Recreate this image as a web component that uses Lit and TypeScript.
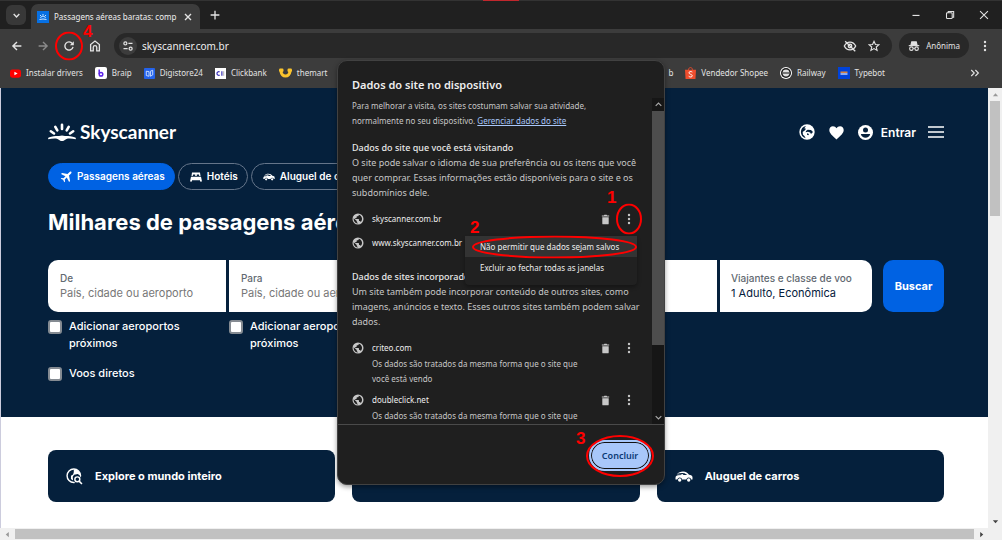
import { LitElement, html, css, svg, nothing } from "lit";
import { customElement } from "lit/decorators.js";

const stroke = (size: number, body: unknown, width = 1.5) => html`<svg width=${size} height=${size} viewBox="0 0 16 16" fill="none"
  stroke="currentColor" stroke-width=${width} aria-hidden="true">${body}</svg>`;
const solid = (w: number, h: number, box: string, body: unknown) => html`<svg width=${w} height=${h} viewBox=${box}
  fill="currentColor" aria-hidden="true">${body}</svg>`;

const globe = (size: number) => solid(size, size, "0 0 24 24", svg`<circle cx="12" cy="12" r="11"/>
  <path fill="#1f1f1f" d="M3.500 10.500l6 5.500v1.500c0 1 .8 2 2 2v1.400C6.500 20.500 2.500 16 3.500 10.500zM13.500 3.500c0 2-1 3-2.200 3H9.500V8.500c0 .8-.6 1.400-1.400 1.400H6.500v2h6.200c.8 0 1.300.6 1.300 1.300v3h1.200c1 0 1.900.7 2.200 1.600C21.500 14.500 21.500 6 13.500 3.500z"/>`);
const earth = (size: number) => solid(size, size, "0 0 24 24", svg`<circle cx="12" cy="12" r="11.500"/>
  <path fill="#05203c" d="M10.500 3C5.500 4 2.800 7.500 2.800 12C2.800 16.500 5.500 20 10 21.200L8.200 18L6 16.200L5.500 12L9 9.200L10.500 7L8 6.200zM21 12l-3-3-5-.5-2.500 2-.5 2 3.500-1 3.200 1.200 1.300 2.300 1.500-1.500z"/>
  <path fill="#05203c" d="M12 14l3 1-1 1.800-2-.8z"/>`);
const trash = solid(11, 11, "0 0 24 24", svg`<path d="M5 7h14v13.500a2 2 0 0 1-2 2H7a2 2 0 0 1-2-2zM4 3h4.500l1-1.500h5l1 1.500H20v2.500H4z"/>`);
const dots = solid(12, 12, "0 0 24 24", svg`<circle cx="12" cy="4" r="2.400"/><circle cx="12" cy="12" r="2.400"/><circle cx="12" cy="20" r="2.400"/>`);
const car = (w: number, h: number) => solid(w, h, "0 0 18 11", svg`<path d="M.5 7C.5 5 1.500 4.200 3.200 4.200L6.500 4.100V3.300H1.800C3.500 1.300 5.500.5 8 .5c3 0 4.800 1.300 6 3.300c2 .2 3.500.8 3.500 2.800V8.500h-1.300a2.500 2.500 0 0 0-4.900 0H7.200a2.500 2.500 0 0 0-4.900 0H.5z"/>
  <path fill="#05203c" d="M2 2.800Q6.500 1.400 9.500 2.200L12.300 3.900H8.500L7.500 3H2z"/><circle cx="4.700" cy="9" r="1.700"/><circle cx="13.700" cy="9" r="1.700"/>`);
const arrow = (d: string) => solid(7, 7, "0 0 8 8", svg`<path d=${d}/>`);

@customElement("step-mark")
class StepMark extends LitElement {
  static properties = { n: {}, w: { type: Number }, h: { type: Number } };
  declare n: string;
  declare w: number;
  declare h: number;
  static styles = css`
    :host { position: absolute; pointer-events: none; z-index: 5; color: #f00; top: 50%; left: 50%; transform: translate(-50%, -50%); }
    :host([n="2"]) { left: auto; right: 0; transform: translateY(-50%); }
    svg { display: block; }
    .n { position: absolute; font: bold 17px/17px "Liberation Sans", Arial, sans-serif; }
    .n1 { left: -9px; top: -15px; }
    .n2 { left: -2px; top: -17px; }
    .n3 { left: -10px; top: -5px; }
    .n4 { left: 28px; top: -9px; }
  `;
  render() {
    const { w, h } = this;
    return html`<svg width=${w} height=${h} fill="none" stroke="currentColor" stroke-width="2">
        <ellipse cx=${w / 2} cy=${h / 2} rx=${w / 2 - 1} ry=${h / 2 - 1} /></svg>
      <span class="n n${this.n}">${this.n}</span>`;
  }
}

@customElement("browser-chrome")
class BrowserChrome extends LitElement {
  static styles = css`
    :host { display: block; background: #3c3c3c; color: #e3e3e3; font: 8px/14px "Noto Sans", "Open Sans", sans-serif; }
    svg { display: block; flex: none; }
    button { all: unset; box-sizing: border-box; display: flex; align-items: center; justify-content: center; position: relative; flex: none; }
    .tabs { display: flex; height: 29px; box-sizing: border-box; background: #202020; border-top: 1px solid #333; padding-left: 6px; position: relative; }
    .alert { position: absolute; top: -1px; left: 48.2%; width: 36px; height: 1px; background: #c1272d; }
    .search { width: 20px; height: 20px; border-radius: 6px; background: #383838; margin-top: 4px; }
    .tab { display: flex; align-items: center; gap: 5px; width: 169px; box-sizing: border-box; padding: 0 6px; margin: 3px 8px 0 5px; background: #3c3c3c; border-radius: 7px 7px 0 0; }
    .title { flex: 1; white-space: nowrap; color: #eee; }
    .sq { width: 14px; height: 28px; }
    .controls { display: flex; margin-left: auto; gap: 20px; padding-right: 11px; }
    .bar { display: flex; align-items: center; height: 33px; padding: 0 11px 0 10px; }
    .nav { display: flex; gap: 12px; margin-right: 12px; }
    .nav button { width: 14px; height: 24px; }
    .dim { color: #8a8a8a; }
    .omni { flex: 1; display: flex; align-items: center; height: 25px; border-radius: 13px; background: #282828; padding: 0 12px 0 5px; gap: 11px; }
    .tune { width: 18px; height: 18px; border-radius: 9px; background: #3c3c3c; margin-right: -6px; }
    .url { all: unset; flex: 1; font-size: 10px; color: #eee; min-width: 0; }
    .incog { height: 25px; border-radius: 13px; background: #282828; padding: 0 9px; gap: 6px; margin: 0 10px 0 7px; }
    .marks { display: flex; align-items: center; height: 22px; gap: 12px; padding: 0 21px 4px 10px; }
    .marks a { display: flex; align-items: center; gap: 5px; color: inherit; text-decoration: none; white-space: nowrap; }
    .group { display: flex; gap: 12px; margin-left: auto; margin-right: 72px; }
  `;
  render() {
    return html`
      <div class="tabs">
        <span class="alert"></span>
        <button class="search" aria-label="Pesquisar guias">${stroke(9, svg`<path d="M3 5.500l5 5 5-5"/>`, 2.5)}</button>
        <div class="tab">
          <svg width="12" height="12" viewBox="0 0 12 12"><rect width="12" height="12" fill="#0770e3"/><path d="M2.500 8.500q3.500-1 7 0M3.500 7a2.600 2.600 0 0 1 5 0M6 3v1.500M3 4l1 1M9 4L8 5" stroke="#cfe6ff" fill="none"/></svg>
          <span class="title">Passagens aéreas baratas: comp</span>
          <button aria-label="Fechar guia">${stroke(12, svg`<path d="M4 4l8 8M12 4l-8 8"/>`, 1.8)}</button>
        </div>
        <button class="sq" aria-label="Nova guia">${stroke(14, svg`<path d="M8 3v10M3 8h10"/>`)}</button>
        <div class="controls">
          <button class="sq" aria-label="Minimizar">${stroke(14, svg`<path d="M4 8.500h8"/>`, 1.3)}</button>
          <button class="sq" aria-label="Restaurar">${stroke(14, svg`<rect x="4" y="5.500" width="6.500" height="6.500" rx="1"/><path d="M6 5.500V4h6.200v6.500H10.500"/>`, 1.2)}</button>
          <button class="sq" aria-label="Fechar">${stroke(14, svg`<path d="M3.500 3.500l9 9M12.500 3.500l-9 9"/>`, 1.2)}</button>
        </div>
      </div>
      <div class="bar">
        <div class="nav">
          <button aria-label="Voltar">${stroke(14, svg`<path d="M13 8H3.500M8 3.300L3.300 8L8 12.700"/>`, 1.6)}</button>
          <button class="dim" aria-label="Avançar">${stroke(14, svg`<path d="M3 8h9.500M8 3.300L12.700 8L8 12.700"/>`, 1.6)}</button>
          <button aria-label="Recarregar">${stroke(14, svg`<path d="M12.600 9A4.700 4.700 0 1 1 11.800 5.200"/><path d="M13.500 2.500V7H9z" fill="currentColor" stroke="none"/>`, 1.6)}<step-mark n="4" .w=${28} .h=${29}></step-mark></button>
          <button aria-label="Página inicial">${stroke(14, svg`<path d="M3 13.500V6.300L8 2.400L13 6.300V13.500H10V9.500a2 2 0 0 0-4 0V13.500z"/>`, 1.5)}</button>
        </div>
        <div class="omni">
          <button class="tune" aria-label="Informações do site">${stroke(12, svg`<circle cx="4.500" cy="4.500" r="2"/><path d="M8.500 4.500H14M2 11.500H7.500"/><circle cx="11.500" cy="11.500" r="2"/>`, 1.7)}</button>
          <input class="url" aria-label="Endereço" value="skyscanner.com.br" />
          <button aria-label="Cookies bloqueados">${stroke(14, svg`<path d="M1.500 8C3 5 5.300 3.500 8 3.500S13 5 14.500 8C13 11 10.700 12.500 8 12.500S3 11 1.500 8z"/><circle cx="8" cy="8" r="2"/><path d="M2.500 2.500l11.500 11.500"/>`, 1.5)}</button>
          <button aria-label="Favoritar">${stroke(12, svg`<path d="M8 1.800l1.900 4.200 4.600.4-3.500 3 1.100 4.500L8 11.500l-4.100 2.400L5 9.400 1.500 6.400l4.600-.4z"/>`, 1.5)}</button>
        </div>
        <button class="incog">${stroke(12, svg`<path d="M1 7.500h14"/><path d="M4 6.500L5 2.500h6l1 4z" fill="currentColor"/><circle cx="4.500" cy="11.500" r="2.300"/><circle cx="11.500" cy="11.500" r="2.300"/><path d="M6.800 11h2.400"/>`)}Anônima</button>
        <button aria-label="Menu">${dots}</button>
      </div>
      <div class="marks">
        <a href="#"><svg width="11" height="11" viewBox="0 0 12 12"><rect y="1.500" width="12" height="9" rx="2.500" fill="#f00"/><path d="M4.800 4v4L8.300 6z" fill="#fff"/></svg>Instalar drivers</a>
        <a href="#"><svg width="12" height="12" viewBox="0 0 12 12"><rect width="12" height="12" rx="2" fill="#fff"/><path d="M4.200 2.500V7" stroke="#5b21e8" stroke-width="1.500"/><circle cx="6" cy="7.200" r="1.800" fill="none" stroke="#5b21e8" stroke-width="1.500"/></svg>Braip</a>
        <a href="#"><svg width="11" height="11" viewBox="0 0 12 12"><rect width="12" height="12" rx="1" fill="#2463eb"/><path d="M2.500 3.500l3 .5v5l-3-.8zM7 3.500l2.500-1v5L7 9z" fill="none" stroke="#cfe0ff"/></svg>Digistore24</a>
        <a href="#"><svg width="11" height="11" viewBox="0 0 12 12"><rect width="12" height="12" fill="#fff"/><path d="M5 4.200a2 2 0 1 0 0 3.600M7.500 3.500v5" fill="none" stroke="#3b32b8" stroke-width="1.300"/><path d="M9.500 3.500v5" stroke="#aaa"/></svg>Clickbank</a>
        <a href="#"><svg width="13" height="12" viewBox="0 0 13 12"><path d="M2 4.500C3 10.500 10 10.500 11 4.500" fill="none" stroke="#fbc42d" stroke-width="3"/><rect x="0" y="1.500" width="4.500" height="3.500" rx="1.200" fill="#fbc42d"/><rect x="8.500" y="1.500" width="4.500" height="3.500" rx="1.200" fill="#fbc42d"/></svg>themart</a>
        <div class="group">
          <a href="#">b</a>
          <a href="#"><svg width="11" height="12" viewBox="0 0 12 13"><path d="M0 3h12l-.6 10H.6z" fill="#ee4d2d"/><path d="M3.800 3C3.800-.2 8.200-.2 8.200 3" fill="none" stroke="#ee4d2d"/><path d="M8 5.500C6.500 4.300 4 5 4.300 6.500S8 8 8 9.500 5.500 11.500 4 10" fill="none" stroke="#fff"/></svg>Vendedor Shopee</a>
          <a href="#"><svg width="12" height="12" viewBox="0 0 12 12"><circle cx="6" cy="6" r="6" fill="#fff"/><circle cx="6" cy="6" r="5" fill="#1a1a1a"/><circle cx="6" cy="6" r="3.400" fill="#ddd"/><path d="M3 6h6" stroke="#333" stroke-width="1.200"/></svg>Railway</a>
          <a href="#"><svg width="12" height="12" viewBox="0 0 12 12"><rect width="12" height="12" fill="#0042da"/><path d="M2.500 5.200h7" stroke="#ff8e20" stroke-width="1.300"/><path d="M2.500 7h7" stroke="#d8e2ff" stroke-width="1.300"/></svg>Typebot</a>
        </div>
        <button aria-label="Mais favoritos">${stroke(12, svg`<path d="M3 4L7 8L3 12M8.500 4L12.500 8l-4 4"/>`, 1.5)}</button>
      </div>`;
  }
}

@customElement("sky-page")
class SkyPage extends LitElement {
  static styles = css`
    :host { display: block; background: #fff; color: #fff; font: 11px/17px Inter, "Liberation Sans", sans-serif; overflow: hidden; }
    svg { display: block; flex: none; }
    button { all: unset; box-sizing: border-box; }
    .hero { background: #05203c; padding: 32px 44px 35px 47px; }
    header { display: flex; align-items: center; height: 24px; gap: 14px; }
    .logo { display: flex; align-items: center; gap: 4px; margin-right: auto; font: 700 19px/24px Lato, sans-serif; color: #fff; text-decoration: none; }
    .user { display: flex; align-items: center; gap: 8px; font-weight: 600; margin-right: -2px; font-size: 12px; }
    .pills { display: flex; gap: 3px; margin-top: 19px; }
    .pill { display: flex; align-items: center; gap: 5px; height: 27px; padding: 0 9px 0 11px; border: 1px solid #65758a; border-radius: 14px; font-weight: 600; font-size: 10px; color: #fff; text-decoration: none; white-space: nowrap; box-sizing: border-box; }
    .on { background: #0062e3; border-color: #0062e3; }
    h1 { font: 700 22px/32px Inter, sans-serif; margin: 16px 0 22px; white-space: nowrap; }
    form { display: grid; grid-template-columns: 178fr 178fr 152fr 152fr 152fr 61px; gap: 6px 3px; padding-right: 8px; }
    .field { height: 52px; box-sizing: border-box; background: #fff; color: #05203c; padding: 10px 11px 10px 12px; display: flex; flex-direction: column; justify-content: center; min-width: 0; white-space: nowrap; overflow: hidden; line-height: 15px; }
    .first { border-radius: 10px 0 0 10px; }
    .last { border-radius: 0 10px 10px 0; padding-left: 11px; }
    .cap { font-size: 10px; font-weight: 500; color: #626971; }
    input.txt { all: unset; width: 100%; }
    input.txt::placeholder { color: #777; opacity: 1; }
    .go { background: #0062e3; border-radius: 10px; text-align: center; font-weight: 700; margin-left: 8px; margin-right: -8px; }
    .check { display: flex; gap: 7px; font-weight: 500; }
    .check input { appearance: none; flex: none; box-sizing: border-box; width: 14px; height: 14px; margin: 2px 0 0; background: #fff; border: 2px solid #858b92; border-radius: 3px; }
    .near { max-width: 140px; }
    .direct { margin-top: 7px; grid-column: 1; }
    .cards { display: grid; grid-template-columns: repeat(3, 1fr); gap: 17px; padding: 33px 44px 0 47px; }
    .card { display: flex; align-items: center; gap: 12px; height: 52px; border-radius: 8px; background: #05203c; color: #fff; padding: 0 18px; text-decoration: none; font-weight: 700; }
  `;
  render() {
    return html`
      <div class="hero">
        <header>
          <a class="logo" href="#"><svg width="28" height="19" viewBox="0 0 28 19"><g stroke="#fff" stroke-width="2.600" stroke-linecap="round" fill="none"><path d="M14 1.800V6M7.300 3.800l2 3.600M20.700 3.800l-2 3.600M2.800 8.300l3.200 2.200M25.200 8.300L22 10.500"/></g><path fill="#fff" d="M.7 14.500C5 12.800 9 13 11 13q3-.8 6 0c2 0 6-.2 10.300 1.500q1 .7.300 1.800c-3-.8-7-1-9.100-.4C16.500 17 15.500 18 14 18s-2.500-1-4.500-2.100C7.400 15.300 3.400 15.500.4 16.300Q-.3 15.200.7 14.500z"/></svg>Skyscanner</a>
          <button aria-label="Idioma">${earth(16)}</button>
          <button aria-label="Salvos">${solid(15, 15, "0 0 24 24", svg`<path d="M12 23C5 17 .5 13 .5 8C.5 4.500 3 2 6.300 2C8.800 2 10.900 3.200 12 5.200C13.100 3.200 15.200 2 17.700 2C21 2 23.500 4.500 23.500 8c0 5-4.500 9-11.500 15z"/>`)}</button>
          <button class="user">${solid(15, 15, "0 0 24 24", svg`<circle cx="12" cy="12" r="12"/><circle cx="12" cy="8" r="4" fill="#05203c"/><path fill="#05203c" d="M4.500 14.500h15c-1 4-4 6-7.500 6s-6.500-2-7.500-6z"/>`)}Entrar</button>
          <button aria-label="Menu">${stroke(16, svg`<path d="M0 3h16M0 8h16M0 13h16"/>`)}</button>
        </header>
        <nav class="pills">
          <a class="pill on" href="#">${solid(12, 12, "0 0 24 24", svg`<path d="M22.500 1.500c1 1 .5 2.500-.8 3.800L18 9l2.200 11-2 2-4.700-9-4 4 .6 4-1.600 1.500-2.200-4.800L1.500 15.500 3 13.900l4 .6 4-4-9-4.700 2-2L15 6l3.700-3.700c1.300-1.300 2.800-1.800 3.800-.8z"/>`)}Passagens aéreas</a>
          <a class="pill" href="#">${solid(12, 10, "0 0 24 20", svg`<path d="M4 1h16l1 7h-2.500l-.5-3h-4.500v3h-3V5H6l-.5 3H3zM2 9.500h20l2 9.500h-4v-2.500H4V19H0z"/>`)}Hotéis</a>
          <a class="pill" href="#">${car(12, 8)}Aluguel de carros</a>
        </nav>
        <h1>Milhares de passagens aéreas baratas</h1>
        <form>
          <label class="field first"><span class="cap">De</span><input class="txt" placeholder="País, cidade ou aeroporto" /></label>
          <label class="field"><span class="cap">Para</span><input class="txt" placeholder="País, cidade ou aeroporto" /></label>
          <button class="field" type="button" aria-label="Ida"></button>
          <button class="field" type="button" aria-label="Volta"></button>
          <button class="field last" type="button"><span class="cap">Viajantes e classe de voo</span>1 Adulto, Econômica</button>
          <button class="go" type="button">Buscar</button>
          <label class="check near"><input type="checkbox" />Adicionar aeroportos próximos</label>
          <label class="check near"><input type="checkbox" />Adicionar aeroportos próximos</label>
          <label class="check direct"><input type="checkbox" />Voos diretos</label>
        </form>
      </div>
      <nav class="cards">
        <a class="card" href="#"><svg width="17" height="17" viewBox="0 0 24 24"><circle cx="11" cy="11" r="9.500" fill="none" stroke="#fff" stroke-width="2"/><path fill="#fff" d="M11 2c6 0 9.500 4 9.500 9l-4-2.500-5 1-2 3 .5 5-3-2V11l3-2 1-3z"/><circle cx="16" cy="16" r="5.500" fill="#05203c"/><circle cx="16" cy="16" r="3.500" fill="none" stroke="#fff" stroke-width="2"/><path d="M18.500 18.500l4 4" stroke="#fff" stroke-width="2.200"/></svg>Explore o mundo inteiro</a>
        <a class="card" href="#" aria-label="Hotéis"></a>
        <a class="card" href="#">${car(18, 11)}Aluguel de carros</a>
      </nav>`;
  }
}

@customElement("site-data-dialog")
class SiteDataDialog extends LitElement {
  static styles = css`
    :host { position: absolute; z-index: 2; top: 60px; left: 50%; transform: translateX(-50%); width: 328px; box-sizing: border-box; border: 1px solid #414141; border-radius: 10px; background: #1f1f1f; color: #c7c7c7; font: 9px/15px "Noto Sans", "Open Sans", sans-serif; box-shadow: 0 2px 5px #0006; }
    svg { display: block; flex: none; }
    button { all: unset; box-sizing: border-box; position: relative; }
    h2 { font-size: 11px; line-height: 18px; margin: 0; padding: 15px 14px 4px; color: #eee; font-weight: 600; }
    .view { display: flex; height: 326px; overflow: hidden; border-bottom: 1px solid #4a4a4a; }
    .body { flex: 1; padding-left: 14px; min-width: 0; }
    .body > p, h3 { margin: 0; }
    .intro { font-size: 8px; }
    .intro a { color: #a8c7fa; }
    h3 { font-size: 9px; font-weight: 500; color: #e8e8e8; padding-top: 12px; }
    .wide { margin-right: 8px; }
    ul { list-style: none; margin: 0; padding: 8px 0 1px; }
    li { display: flex; align-items: flex-start; gap: 8px; padding: 3px 0; position: relative; min-height: 24px; box-sizing: border-box; font-size: 8px; }
    li > svg { margin-top: 2px; }
    .txt { flex: 1; line-height: 15px; }
    .host { color: #eee; }
    .txt p { margin: 1px 0 0; }
    .acts { display: flex; gap: 12px; margin: 2px 17px 0 0; }
    .menu { position: absolute; z-index: 3; top: 28px; right: 15px; width: 172px; height: 49px; border-radius: 4px; background: #212121; box-shadow: 0 2px 4px #0005; color: #eee; }
    .menu button { display: block; width: 100%; padding: 3px 15px; height: 21px; white-space: nowrap; }
    .menu .hot { background: #333; }
    .track { width: 12px; background: #161616; display: flex; flex-direction: column; align-items: center; justify-content: space-between; color: #aaa; }
    .thumb { width: 12px; height: 234px; background: #4d4d4d; margin: 0 0 auto; }
    .cap { height: 13px; display: flex; align-items: center; }
    footer { display: flex; justify-content: flex-end; padding: 15px 13px 13px; }
    .done { width: 62px; height: 31px; line-height: 27px; border-radius: 16px; border: 2px solid #a8c7fa; background: #a8c7fa; box-shadow: inset 0 0 0 1px #111; color: #0b3a75; text-align: center; font-weight: 600; }
  `;
  row(host: string, note = "", mark = false, menu = false) {
    return html`<li>${globe(12)}
      <div class="txt"><span class="host">${host}</span>${note ? html`<p>${note}</p>` : nothing}</div>
      <div class="acts"><button aria-label="Excluir">${trash}</button><button aria-label="Mais ações">${dots}${mark ? html`<step-mark n="1" .w=${26} .h=${31}></step-mark>` : nothing}</button></div>
      ${menu ? html`<div class="menu" role="menu">
        <button class="hot" role="menuitem">Não permitir que dados sejam salvos<step-mark n="2" .w=${165} .h=${23}></step-mark></button>
        <button role="menuitem">Excluir ao fechar todas as janelas</button></div>` : nothing}</li>`;
  }
  render() {
    const note = "Os dados são tratados da mesma forma que o site que você está vendo";
    return html`
      <h2>Dados do site no dispositivo</h2>
      <div class="view">
        <div class="body">
          <p class="intro wide">Para melhorar a visita, os sites costumam salvar sua atividade,<br />normalmente no seu dispositivo. <a href="#">Gerenciar dados do site</a></p>
          <h3>Dados do site que você está visitando</h3>
          <p class="wide">O site pode salvar o idioma de sua preferência ou os itens que você quer comprar. Essas informações estão disponíveis para o site e os subdomínios dele.</p>
          <ul>${this.row("skyscanner.com.br", "", true, true)}${this.row("www.skyscanner.com.br")}</ul>
          <h3>Dados de sites incorporados</h3>
          <p class="wide">Um site também pode incorporar conteúdo de outros sites, como imagens, anúncios e texto. Esses outros sites também podem salvar dados.</p>
          <ul>${this.row("criteo.com", note)}${this.row("doubleclick.net", note)}</ul>
        </div>
        <div class="track"><span class="cap">${stroke(9, svg`<path d="M3 10.500l5-5 5 5"/>`, 2)}</span><div class="thumb"></div><span class="cap">${stroke(9, svg`<path d="M3 5.500l5 5 5-5"/>`, 2)}</span></div>
      </div>
      <footer><button class="done">Concluir<step-mark n="3" .w=${68} .h=${42}></step-mark></button></footer>`;
  }
}

@customElement("app-root")
class AppRoot extends LitElement {
  static styles = css`
    :host { display: flex; flex-direction: column; height: 100vh; position: relative; overflow: hidden; background: #f0f0f0; }
    .mid { flex: 1; min-height: 0; display: flex; border-left: 1px solid #ccd; }
    sky-page { flex: 1; min-width: 0; }
    .v { width: 14px; display: flex; flex-direction: column; align-items: center; justify-content: space-between; padding: 3px 0; box-sizing: border-box; color: #444; }
    .v i { width: 10px; height: 115px; background: #c1c1c1; margin: 3px 0 auto; }
    .h { display: flex; align-items: center; gap: 4px; height: 12px; padding: 0 17px 0 4px; color: #444; }
    .h i { flex: 1; height: 10px; background: #c1c1c1; }
    svg { display: block; }
    .off { color: #999; }
  `;
  render() {
    return html`
      <browser-chrome></browser-chrome>
      <div class="mid"><sky-page></sky-page>
        <div class="v"><span class="off">${arrow("M1 6h6L4 2.500z")}</span><i></i>${arrow("M1 2.500h6L4 6z")}</div></div>
      <div class="h"><span class="off">${arrow("M5.500 1v6L2 4z")}</span><i></i>${arrow("M2.500 1v6L6 4z")}</div>
      <site-data-dialog></site-data-dialog>`;
  }
}
